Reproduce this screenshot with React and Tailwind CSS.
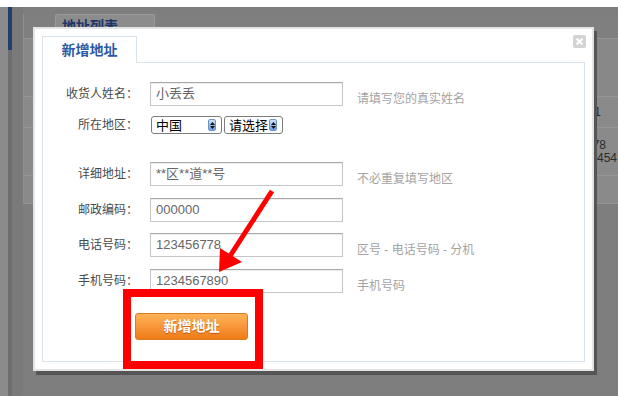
import React from "react";

const Spinner = () => (
  <div className="flex h-[12px] w-[8px] flex-col items-center justify-center gap-[1px] rounded-[2px] border border-[#6f95c8] bg-gradient-to-b from-[#cfe2fb] to-[#6d9ee0]">
    <svg width="5" height="3" viewBox="0 0 5 3">
      <path d="M2.5 0 L5 3 L0 3 Z" fill="#111" />
    </svg>
    <svg width="5" height="3" viewBox="0 0 5 3">
      <path d="M0 0 L5 0 L2.5 3 Z" fill="#111" />
    </svg>
  </div>
);

const Select = ({ value, width }) => (
  <div
    className={`flex h-[18px] items-center justify-between rounded-[3px] border border-[#7d7d7d] bg-white pl-[4px] pr-[5px] text-[13px] leading-none text-black ${width}`}
  >
    <span>{value}</span>
    <Spinner />
  </div>
);

const Field = ({ label, value, hint, className = "" }) => (
  <div className={`flex items-start ${className}`}>
    <div className="flex h-[24px] w-[95px] items-center justify-end text-[12px] text-[#4a4a4a]">
      {label}
    </div>
    <div className="ml-[12px] flex h-[24px] w-[193px] items-center border border-[#c6c6c6] border-t-[#a9a9a9] pl-[5px] text-[13px] text-[#666] shadow-[inset_0_1px_1px_rgba(0,0,0,0.08)]">
      {value}
    </div>
    {hint && (
      <div className="ml-[14px] pt-[10px] text-[12px] leading-[14px] text-[#a3a3a3]">
        {hint}
      </div>
    )}
  </div>
);

export default function App() {
  return (
    <div className="relative h-[396px] w-[618px] overflow-hidden bg-[#7e7e7e] font-['Liberation_Sans','Noto_Sans_CJK_SC',sans-serif]">
      {/* page behind the overlay */}
      <div className="h-[7px] bg-white" />
      <div className="flex h-[389px]">
        <div className="w-[8px] bg-[#8b8b8b]" />
        <div className="flex w-[4px] flex-col">
          <div className="h-[43px] bg-[#1f3f6d]" />
          <div className="flex-1 bg-[#6f6f6f]" />
        </div>
        <div className="w-[11px] bg-[#7a7a7a]" />
        <div className="flex-1 pt-[7px]">
          <div className="flex h-[190px] flex-col border-l border-[#8f8f8f] bg-[#7f7f7f]">
            <div className="flex h-[24px] items-start pl-[31px]">
              <div className="h-[16px] w-[100px] rounded-t-[2px] border border-b-0 border-[#9a9a9a] bg-[#8c8c8c] pl-[6px] pt-[3px] text-[14px] font-bold leading-[16px] text-[#1d3567]">
                地址列表
              </div>
            </div>
            <div className="h-[58px] border-t border-[#959595] bg-[#888888]" />
            <div className="flex h-[31px] items-center justify-end border-t border-[#959595] bg-[#8a8a8a] pr-[17px] text-[12px] text-[#2a2a2a]">
              1
            </div>
            <div className="flex h-[48px] flex-col items-end justify-center border-t border-[#959595] bg-[#8a8a8a] text-[12px] leading-[13px] text-[#2a2a2a]">
              <span className="pr-[12px]">12345678</span>
              <span className="pr-[1px]">0571-8888454</span>
            </div>
            <div className="h-[29px] border-y border-[#959595] bg-[#8a8a8a]" />
          </div>
        </div>
      </div>

      {/* dialog */}
      <div className="absolute left-[33px] top-[27px] flex h-[344px] w-[561px] flex-col border-2 border-[#e4e4e4] bg-white p-[7px] shadow-[3px_4px_0_#555]">
        <div className="flex h-[26px] items-start">
          <div className="relative z-10 flex h-[27px] w-[95px] items-center justify-center border border-b-0 border-[#dbe3ea] bg-white text-[14px] font-bold text-[#2b59a6]">
            新增地址
          </div>
          <div className="ml-auto mr-[-1px] mt-[-1px] flex h-[13px] w-[13px] items-center justify-center rounded-[2px] bg-[#d3d3d3]">
            <svg width="9" height="9" viewBox="0 0 9 9">
              <path d="M1.5 1.5 L7.5 7.5 M7.5 1.5 L1.5 7.5" stroke="#fff" strokeWidth="2" />
            </svg>
          </div>
        </div>
        <div className="flex h-[300px] flex-col border border-[#dbe3ea] pt-[19px]">
          <Field label="收货人姓名：" value="小丢丢" hint="请填写您的真实姓名" />
          <div className="mt-[10px] flex items-center">
            <div className="flex h-[18px] w-[95px] items-center justify-end text-[12px] text-[#4a4a4a]">
              所在地区：
            </div>
            <div className="ml-[13px] flex gap-[2px]">
              <Select value="中国" width="w-[71px]" />
              <Select value="请选择" width="w-[59px]" />
            </div>
          </div>
          <Field className="mt-[28px]" label="详细地址：" value="**区**道**号" hint="不必重复填写地区" />
          <Field className="mt-[12px]" label="邮政编码：" value="000000" />
          <Field className="mt-[11px]" label="电话号码：" value="123456778" hint="区号 - 电话号码 - 分机" />
          <Field className="mt-[12px]" label="手机号码：" value="1234567890" hint="手机号码" />
          <div className="mt-[20px] pl-[92px]">
            <button className="h-[27px] w-[113px] rounded-[3px] border border-[#dc7a22] bg-gradient-to-b from-[#fdb257] to-[#f07b12] text-[14px] font-bold text-white [text-shadow:0_1px_1px_rgba(150,60,0,0.6)]">
              新增地址
            </button>
          </div>
        </div>
      </div>

      {/* annotation: arrow */}
      <svg className="pointer-events-none absolute left-0 top-0" width="618" height="396" viewBox="0 0 618 396">
        <line x1="272" y1="191" x2="230" y2="256" stroke="#f00" strokeWidth="5" />
        <polygon points="219,272 220,248 242,262" fill="#f00" />
      </svg>

      {/* annotation: red frame */}
      <div className="pointer-events-none absolute left-[123px] top-[289px] h-[80px] w-[140px] border-[8px] border-[#ff0000]" />
    </div>
  );
}
